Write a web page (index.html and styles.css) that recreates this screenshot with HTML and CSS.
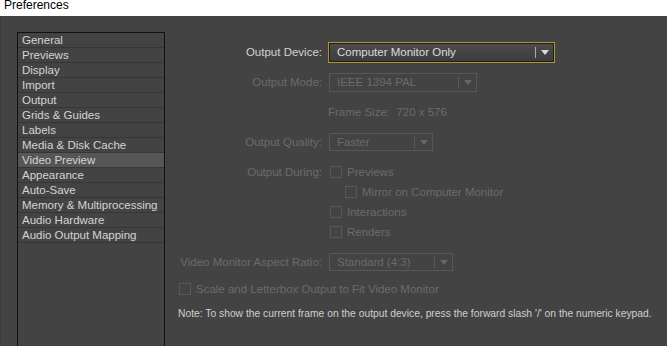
FILE: index.html
```html
<!DOCTYPE html>
<html lang="en">
<head>
    <meta charset="UTF-8">
    <title>Preferences</title>
    <link rel="stylesheet" href="styles.css">
</head>
<body>

    <div class="titlebar">Preferences</div>

    <div class="main">
        <div class="gutter"></div>

        <ul class="nav">
            <li>General</li>
            <li>Previews</li>
            <li>Display</li>
            <li>Import</li>
            <li>Output</li>
            <li>Grids &amp; Guides</li>
            <li>Labels</li>
            <li>Media &amp; Disk Cache</li>
            <li class="active">Video Preview</li>
            <li>Appearance</li>
            <li>Auto-Save</li>
            <li>Memory &amp; Multiprocessing</li>
            <li>Audio Hardware</li>
            <li>Audio Output Mapping</li>
        </ul>

        <div class="form">
            <div class="row">
                <span class="label">Output Device:</span>
                <div class="select focus w-device"><span>Computer Monitor Only</span><i class="arrow"></i></div>
            </div>
            <div class="row gap">
                <span class="label off">Output Mode:</span>
                <div class="select off w-mode"><span>IEEE 1394 PAL</span><i class="arrow"></i></div>
            </div>
            <div class="row gap">
                <span class="label"></span>
                <span class="off">Frame Size:&nbsp; 720 x 576</span>
            </div>
            <div class="row gap">
                <span class="label off">Output Quality:</span>
                <div class="select off w-quality"><span>Faster</span><i class="arrow"></i></div>
            </div>
            <div class="row gap">
                <span class="label off">Output During:</span>
                <span class="check"></span><span class="off">Previews</span>
            </div>
            <div class="row">
                <span class="label"></span>
                <span class="check indent"></span><span class="off">Mirror on Computer Monitor</span>
            </div>
            <div class="row">
                <span class="label"></span>
                <span class="check"></span><span class="off">Interactions</span>
            </div>
            <div class="row">
                <span class="label"></span>
                <span class="check"></span><span class="off">Renders</span>
            </div>
            <div class="row gap">
                <span class="label off">Video Monitor Aspect Ratio:</span>
                <div class="select off w-aspect"><span>Standard (4:3)</span><i class="arrow"></i></div>
            </div>
            <div class="row scale">
                <span class="check first"></span><span class="off">Scale and Letterbox Output to Fit Video Monitor</span>
            </div>
            <div class="row note">
                Note: To show the current frame on the output device, press the forward slash '/' on the numeric keypad.
            </div>
        </div>
    </div>

</body>
</html>
```

FILE: styles.css
```css
body {
    margin: 0;
    font-family: "Liberation Sans", Arial, sans-serif;
    font-size: 11.5px;
    background-color: #434343;
    color: #d2d2d2;
    height: 346px;
    overflow: hidden;
}
.titlebar {
    height: 16px;
    background: #fff;
    color: #000;
    font-size: 12px;
    line-height: 10px;
    padding-left: 4px;
    overflow: hidden;
}
.main {
    display: flex;
    height: 330px;
}
.gutter {
    width: 16px;
    border-left: 1px solid #3b3b3b;
}
.nav {
    list-style: none;
    margin: 16px 0 0 0;
    padding: 0;
    width: 146px;
    border: 1px solid #111;
    border-bottom: none;
}
.nav li {
    height: 14px;
    line-height: 14px;
    padding-left: 4px;
    border-bottom: 1px solid #363636;
    color: #d4d4d4;
    white-space: nowrap;
}
.nav li.active {
    background: #565656;
}
.form {
    padding: 26px 0 0 13px;
    flex: 1;
}
.row {
    display: flex;
    align-items: center;
    height: 20px;
    white-space: nowrap;
}
.row.gap {
    margin-top: 10px;
}
.label {
    width: 144px;
    text-align: right;
    margin-right: 6px;
    flex: none;
}
.off {
    color: #6b6b6b;
}
.select {
    box-sizing: border-box;
    display: flex;
    align-items: center;
    height: 19px;
    padding-left: 7px;
    border: 1px solid #575757;
    position: relative;
}
.select span {
    flex: 1;
}
.select .arrow {
    width: 17px;
    height: 11px;
    border-left: 1px solid #5a5a5a;
    position: relative;
}
.select .arrow::after {
    content: "";
    position: absolute;
    left: 5px;
    top: 3px;
    border-left: 4px solid transparent;
    border-right: 4px solid transparent;
    border-top: 5px solid #666;
}
.select.focus {
    height: 21px;
    border: 1px solid #b5922f;
    box-shadow: inset 0 0 0 1px #1e1e1e;
    background: linear-gradient(#4c4c4c, #3c3c3c);
    color: #dcdcdc;
    padding-left: 8px;
}
.select.focus .arrow {
    border-left-color: #aaa;
    width: 18px;
}
.select.focus .arrow::after {
    border-top-color: #d8d8d8;
}
.w-device { width: 227px; }
.w-mode { width: 148px; margin-left: 1px; }
.w-quality { width: 104px; margin-left: 1px; height: 18px; }
.w-aspect { width: 124px; margin-left: 1px; height: 18px; }
.check {
    width: 10px;
    height: 10px;
    border: 1px solid #585858;
    margin: 0 5px 0 2px;
    flex: none;
}
.check.indent {
    margin-left: 17px;
}
.check.first {
    margin-left: 1px;
}
.row.scale {
    margin-top: 7px;
}
.row.note {
    margin-top: 4px;
    color: #cfcfcf;
    font-size: 10.3px;
}
```
